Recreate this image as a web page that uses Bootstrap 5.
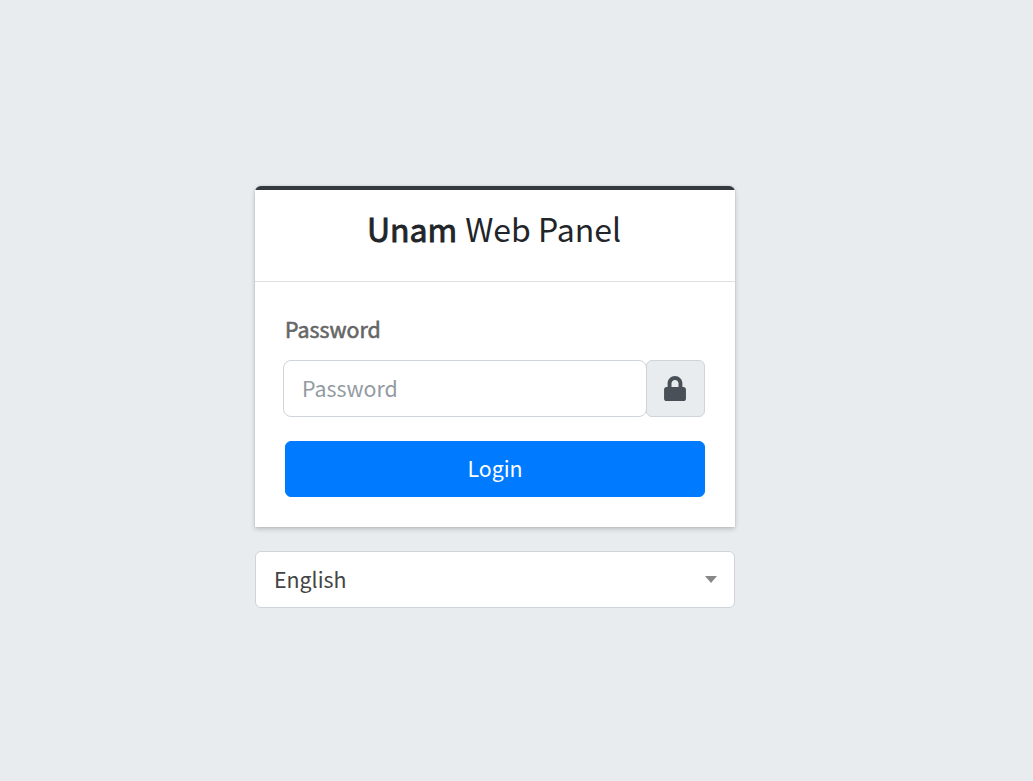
<!DOCTYPE html>
<html lang="en"><head><meta charset="utf-8"><title>Unam Web Panel</title>
<link href="https://cdn.jsdelivr.net/npm/bootstrap@5.3.0/dist/css/bootstrap.min.css" rel="stylesheet">
<style>
html,body{height:100%}
body{background:#e9ecef;font-family:"Noto Sans CJK JP","Noto Sans",sans-serif;font-size:21.33px;color:#212529}
.login-wrap{width:480px;margin-left:255px;padding-top:186px}
.login-card{border:0;border-top:4px solid #343a40;border-radius:6px 6px 0 0;box-shadow:0 0 2px rgba(0,0,0,.14),0 2px 5px rgba(0,0,0,.2);margin-bottom:24px}
.login-head{padding:0 2px 16px 0;height:92px;border-bottom:1px solid rgba(0,0,0,.125);font-size:32px;line-height:48px;background:#fff}
.login-head b{font-weight:400;-webkit-text-stroke:.9px #212529;margin-right:8px}
.login-body{padding:30px}
.pw-label{font-weight:400;-webkit-text-stroke:.6px #666;color:#666;font-size:21.33px;line-height:33px;display:block;margin-bottom:15px}
.pw-group{margin-left:-2px;width:422px;height:57px;margin-bottom:24px}
.pw-input,.lang-pick{font-size:21.33px;height:57px;padding:0 18px 2px;border-color:#ced4da;color:#495057}
.pw-input{flex:1 1 auto;width:1%;border-radius:8px}
.lang-pick{border-radius:6px;color:#444}
.pw-input::placeholder{color:#939ba2}
.pw-addon{width:59px;flex:none;margin-left:-1px;justify-content:center;background:#e9ecef;border-color:#ced4da;border-radius:6px;padding:0 2px 0 0}
.login-btn{height:56px;font-size:21.33px;background:#007bff;border-color:#007bff;border-radius:6px;padding:0 0 2px 0}
.lang-pick{background-image:url("data:image/svg+xml,%3Csvg xmlns='http://www.w3.org/2000/svg' viewBox='0 0 12 7'%3E%3Cpath fill='%23888' d='M0 0h12L6 7z'/%3E%3C/svg%3E");background-size:12px 7px;background-position:right 17px center}
</style></head>
<body>
<div class="login-wrap">
<div class="card login-card">
<div class="login-head d-flex align-items-center justify-content-center"><b>Unam</b> Web Panel</div>
<div class="login-body">
<label class="pw-label" for="pw">Password</label>
<div class="d-flex pw-group">
<input id="pw" type="password" class="form-control pw-input" placeholder="Password">
<span class="input-group-text pw-addon"><svg width="22" height="25" viewBox="0 0 448 512" fill="#495057"><path d="M400 224h-24v-72C376 68.200 307.800 0 224 0S72 68.200 72 152v72H48c-26.500 0-48 21.500-48 48v192c0 26.500 21.500 48 48 48h352c26.500 0 48-21.500 48-48V272c0-26.500-21.500-48-48-48zm-104 0H152v-72c0-39.700 32.300-72 72-72s72 32.300 72 72v72z"/></svg></span>
</div>
<button type="button" class="btn btn-primary w-100 login-btn">Login</button>
</div>
</div>
<select class="form-select lang-pick"><option>English</option></select>
</div>
<script src="https://cdn.jsdelivr.net/npm/bootstrap@5.3.0/dist/js/bootstrap.bundle.min.js"></script>
</body></html>
